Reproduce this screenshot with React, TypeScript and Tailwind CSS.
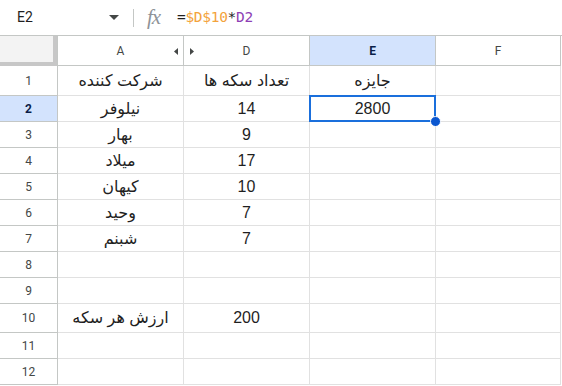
import React from "react";

const rows: { n: number; a: string; d: string; e: string; h: string }[] = [
  { n: 1, a: "شرکت کننده", d: "تعداد سکه ها", e: "جایزه", h: "h-[30px]" },
  { n: 2, a: "نیلوفر", d: "14", e: "2800", h: "h-[26px]" },
  { n: 3, a: "بهار", d: "9", e: "", h: "h-[26px]" },
  { n: 4, a: "میلاد", d: "17", e: "", h: "h-[26px]" },
  { n: 5, a: "کیهان", d: "10", e: "", h: "h-[26px]" },
  { n: 6, a: "وحید", d: "7", e: "", h: "h-[26px]" },
  { n: 7, a: "شبنم", d: "7", e: "", h: "h-[26px]" },
  { n: 8, a: "", d: "", e: "", h: "h-[26px]" },
  { n: 9, a: "", d: "", e: "", h: "h-[26px]" },
  { n: 10, a: "ارزش هر سکه", d: "200", e: "", h: "h-[29px]" },
  { n: 11, a: "", d: "", e: "", h: "h-[26px]" },
  { n: 12, a: "", d: "", e: "", h: "h-[26px]" },
];

const cellFont = "font-['Liberation_Sans','DejaVu_Sans',sans-serif] text-[16px] text-[#1f1f1f]";

export default function App() {
  return (
    <div className="w-[562px] h-[386px] bg-white overflow-hidden">
      {/* toolbar */}
      <div className="h-[36px] border-b border-[#c4c7c5] flex items-center">
        <div className="w-[100px] pl-[17px] font-['Roboto',sans-serif] text-[14px] text-[#1f1f1f]">E2</div>
        <div className="w-[33px] flex items-center pl-[9px]">
          <svg width="10" height="6" viewBox="0 0 10 6">
            <path d="M0 0 L10 0 L5 5 Z" fill="#444746" />
          </svg>
        </div>
        <div className="w-px h-[18px] bg-[#c4c7c5]" />
        <div className="w-[43px] pl-[13px] font-['Liberation_Serif',serif] italic text-[21px] text-[#8f9398] leading-none tracking-[-1px]">fx</div>
        <div className="font-['DejaVu_Sans_Mono',monospace] text-[14.5px] tracking-[-0.3px]">
          <span className="text-[#1f1f1f]">=</span>
          <span className="text-[#f3a33c]">$D$10</span>
          <span className="text-[#1f1f1f]">*</span>
          <span className="text-[#8e3fb5]">D2</span>
        </div>
      </div>

      {/* grid */}
      <div className="grid grid-cols-[58px_126px_126px_126px_125px]">
        {/* header row */}
        <div className="h-[30px] relative bg-white border-r border-b border-[#c4c7c5]">
          <div className="absolute left-0 top-0 w-[53px] h-[26px] bg-[#f3f3f3] border-r-[4px] border-b-[4px] border-[#c7c7c7] box-content" />
        </div>
        <div className="h-[30px] relative border-r border-b border-[#c4c7c5] flex items-center justify-center font-['Roboto',sans-serif] text-[12px] text-[#444746]">
          A
          <svg className="absolute right-[5px] top-[12px]" width="4" height="7" viewBox="0 0 4 7">
            <path d="M4 0 L0 3.5 L4 7 Z" fill="#444746" />
          </svg>
        </div>
        <div className="h-[30px] relative border-r border-b border-[#c4c7c5] flex items-center justify-center font-['Roboto',sans-serif] text-[12px] text-[#444746]">
          D
          <svg className="absolute left-[6px] top-[12px]" width="4" height="7" viewBox="0 0 4 7">
            <path d="M0 0 L4 3.5 L0 7 Z" fill="#444746" />
          </svg>
        </div>
        <div className="h-[30px] bg-[#d3e3fd] border-r border-b border-[#c4c7c5] flex items-center justify-center font-['Roboto',sans-serif] text-[12px] font-bold text-[#0b1e47]">
          E
        </div>
        <div className="h-[30px] border-r border-b border-[#c4c7c5] flex items-center justify-center font-['Roboto',sans-serif] text-[12px] text-[#444746]">
          F
        </div>

        {rows.map((r) => (
          <React.Fragment key={r.n}>
            <div
              className={`${r.h} border-r border-b border-[#c4c7c5] flex items-center justify-center font-['Roboto',sans-serif] text-[12px] ${
                r.n === 2 ? "bg-[#d3e3fd] font-bold text-[#0b1e47]" : "bg-white text-[#444746]"
              }`}
            >
              {r.n}
            </div>
            <div className={`${r.h} border-r border-b border-[#e1e1e1] flex items-center justify-center ${cellFont}`} dir="rtl">
              {r.a}
            </div>
            <div className={`${r.h} border-r border-b border-[#e1e1e1] flex items-center justify-center ${cellFont}`} dir="rtl">
              {r.d}
            </div>
            <div className={`${r.h} relative border-r border-b border-[#e1e1e1] flex items-center justify-center ${cellFont}`} dir="rtl">
              {r.e}
              {r.n === 2 && (
                <>
                  <div className="absolute z-10 left-[-1px] top-[-1px] right-[-1px] bottom-[-1px] border-2 border-[#1a6fdc]" />
                  <div className="absolute z-20 right-[-6px] bottom-[-6px] w-[11px] h-[11px] rounded-full bg-[#0b57d0] border border-white" />
                </>
              )}
            </div>
            <div className={`${r.h} border-r border-b border-[#e1e1e1]`} />
          </React.Fragment>
        ))}
      </div>
    </div>
  );
}
